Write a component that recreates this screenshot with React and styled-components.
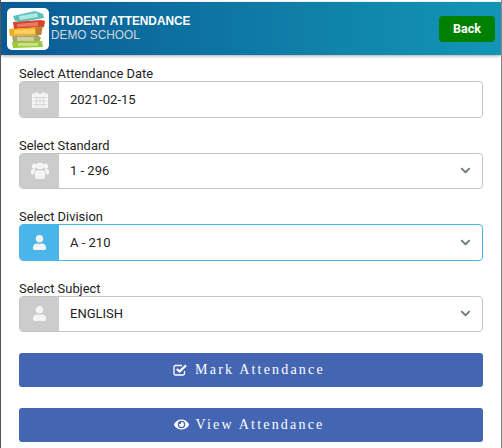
import React from 'react';
import styled, { createGlobalStyle } from 'styled-components';
import { FaUser, FaEye, FaChevronDown } from 'react-icons/fa';

const Global = createGlobalStyle`
html, body {
    margin: 0;
    padding: 0;
    background: #fff;
}
body {
    font-family: Roboto, "Liberation Sans", sans-serif;
}
`;

const Page = styled.div`
width: 502px;
height: 448px;
overflow: hidden;
box-sizing: border-box;
padding-top: 2px;
border-left: 1px solid #555;
border-right: 1px solid #888;
background: #fff;
`;

const Header = styled.header`
height: 53px;
display: flex;
align-items: center;
padding: 0 6px;
background: linear-gradient(90deg, #0a5a94 0%, #0f7fa8 60%, #1296b6 100%);
box-shadow: 0 1px 3px rgba(0, 0, 0, 0.35);
`;

const Logo = styled.div`
width: 42px;
height: 42px;
flex: none;
border-radius: 5px;
background: #fff;
display: flex;
align-items: center;
justify-content: center;
`;

const Titles = styled.div`
flex: 1;
margin-left: 2px;
margin-top: -2px;
font-family: "Liberation Sans", Arial, sans-serif;
font-size: 11.85px;
line-height: 14px;
`;

const Title = styled.div`
color: #fff;
font-weight: 700;
`;

const School = styled.div`
color: #cfd8de;
`;

const BackButton = styled.button`
width: 56px;
height: 26px;
border: 0;
border-radius: 4px;
background: #008000;
color: #fff;
font-family: Roboto, sans-serif;
font-weight: 700;
font-size: 12.5px;
padding: 0;
`;

const Form = styled.div`
padding: 10px 18px 0;
display: flex;
flex-direction: column;
`;

const Field = styled.div`
display: flex;
flex-direction: column;
margin-bottom: 19px;
&:last-of-type { margin-bottom: 20.5px; }
`;

const Label = styled.label`
font-size: 12.9px;
line-height: 18px;
margin-bottom: -2px;
color: #222;
`;

const InputGroup = styled.div`
height: 36.5px;
box-sizing: border-box;
display: flex;
align-items: stretch;
border: 1px solid ${p => (p.$focus ? '#4ab5e8' : '#c4c4c4')};
border-radius: 4px;
overflow: hidden;
background: #fff;
`;

const Addon = styled.div`
width: 39px;
flex: none;
display: flex;
align-items: center;
justify-content: center;
color: #f4f4f4;
font-size: 15px;
background: ${p => (p.$focus ? '#4ab5e8' : '#cccccc')};
`;

const Value = styled.div`
flex: 1;
display: flex;
align-items: center;
padding-left: 11px;
font-size: 13px;
color: #222;
`;

const Arrow = styled.div`
width: 33px;
display: flex;
align-items: center;
justify-content: center;
color: #667684;
font-size: 11px;
`;

const ActionButton = styled.button`
height: 34px;
margin-bottom: 21px;
border: 0;
border-radius: 3px;
background: #4365b2;
color: #fff;
font-family: "Liberation Serif", serif;
font-size: 14px;
letter-spacing: 2.2px;
display: flex;
align-items: center;
justify-content: center;
gap: 7px;
padding: 0 4px 0 0;
& svg { font-size: 15px; }
`;

// fa4 style calendar, the package one has the wrong grid
const CalendarIcon = () => (
    <svg width="16" height="17" viewBox="0 0 16 17">
        <path fill="currentColor" d="M1 2.5 h2.5 V1 h2 v1.5 h5 V1 h2 v1.5 H15 a1 1 0 0 1 1 1 V16 a1 1 0 0 1 -1 1 H1 a1 1 0 0 1 -1 -1 V3.5 a1 1 0 0 1 1 -1 Z" />
        <g fill="#cccccc" opacity="0.75">
            <rect x="1" y="6" width="14" height="1" />
            <rect x="1" y="9.5" width="14" height="1" />
            <rect x="1" y="13" width="14" height="1" />
            <rect x="4" y="6" width="1" height="10" />
            <rect x="7.5" y="6" width="1" height="10" />
            <rect x="11" y="6" width="1" height="10" />
        </g>
    </svg>
);

const UsersIcon = () => (
    <svg width="18" height="17" viewBox="0 0 18 17" fill="currentColor">
        <circle cx="3.4" cy="4" r="2.6" />
        <circle cx="14.6" cy="4" r="2.6" />
        <circle cx="9" cy="4" r="3.6" />
        <path d="M0 8.5 a2 2 0 0 1 2 -1.5 h2 a4 4 0 0 0 .6 1.5 a3.5 3.5 0 0 0 -1.6 3 v1 H1 a1 1 0 0 1 -1 -1 Z" />
        <path d="M18 8.5 a2 2 0 0 0 -2 -1.5 h-2 a4 4 0 0 1 -.6 1.5 a3.5 3.5 0 0 1 1.6 3 v1 h2 a1 1 0 0 0 1 -1 Z" />
        <path d="M6.5 8.5 h5 a2.5 2.5 0 0 1 2.5 2.5 v4 a2 2 0 0 1 -2 2 H6 a2 2 0 0 1 -2 -2 v-4 a2.5 2.5 0 0 1 2.5 -2.5 Z" />
    </svg>
);

// fa4 check-square-o, the tick sticks out over the top right corner
const CheckIcon = () => (
    <svg width="15" height="12" viewBox="0 0 15 12">
        <path d="M11.5 7 V9.5 a1.5 1.5 0 0 1 -1.5 1.5 H2.5 A1.5 1.5 0 0 1 1 9.5 V3 a1.5 1.5 0 0 1 1.5 -1.5 H9" fill="none" stroke="currentColor" strokeWidth="1.3" />
        <path d="M3.8 5 L6.6 7.6 L13 1.4" fill="none" stroke="currentColor" strokeWidth="2.2" />
    </svg>
);

// stack of books
const BooksLogo = () => (
    <svg width="40" height="40" viewBox="0 0 40 40">
        <path d="M5 7 L27 2 L35 5 L36 9 L13 13 L7 12 Z" fill="#56c2bb" />
        <path d="M11 7 L29 4 L30 8 L12 11 Z" fill="#b5e6e0" />
        <path d="M5 13 L33 11 L37 12 L36 18 L6 20 Z" fill="#d8432f" />
        <path d="M9 15 L30 13 L30 17 L9 18 Z" fill="#e77a63" />
        <path d="M1 20 L34 18 L33 26 L2 27 Z" fill="#f2ab1e" />
        <path d="M6 21 L27 20 L27 25 L6 25 Z" fill="#f9cf62" />
        <path d="M27 19 L35 17 L33 26 L28 26 Z" fill="#c07f2c" />
        <path d="M4 27 L30 26 L33 29 L31 33 L5 33 Z" fill="#a6a469" />
        <path d="M9 28 L26 28 L26 32 L9 32 Z" fill="#cfcf9c" />
        <path d="M4 33 L34 32 L35 38 L5 39 Z" fill="#9dca3c" />
        <path d="M10 34 L30 34 L30 37 L10 37 Z" fill="#c5e27f" />
    </svg>
);

const fields = [
    { label: 'Select Attendance Date', value: '2021-02-15', icon: <CalendarIcon /> },
    { label: 'Select Standard', value: '1 - 296', icon: <UsersIcon />, select: true },
    { label: 'Select Division', value: 'A - 210', icon: <FaUser />, select: true, focus: true },
    { label: 'Select Subject', value: 'ENGLISH', icon: <FaUser />, select: true },
];

export default function App() {
    return (
        <Page>
            <Global />
            <Header>
                <Logo><BooksLogo /></Logo>
                <Titles>
                    <Title>STUDENT ATTENDANCE</Title>
                    <School>DEMO SCHOOL</School>
                </Titles>
                <BackButton>Back</BackButton>
            </Header>
            <Form>
                {fields.map(f => (
                    <Field key={f.label}>
                        <Label>{f.label}</Label>
                        <InputGroup $focus={f.focus}>
                            <Addon $focus={f.focus}>{f.icon}</Addon>
                            <Value>{f.value}</Value>
                            {f.select && <Arrow><FaChevronDown /></Arrow>}
                        </InputGroup>
                    </Field>
                ))}
                <ActionButton><CheckIcon /> Mark Attendance</ActionButton>
                <ActionButton><FaEye /> View Attendance</ActionButton>
            </Form>
        </Page>
    );
}
